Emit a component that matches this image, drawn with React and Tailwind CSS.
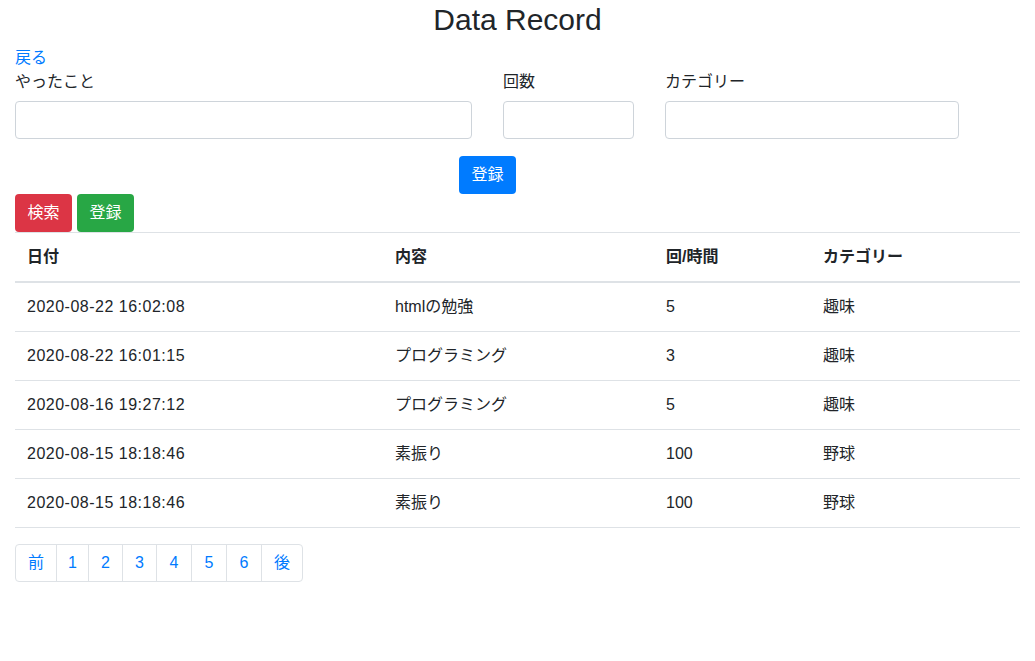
const records = [
  { date: "2020-08-22 16:02:08", content: "htmlの勉強", count: "5", category: "趣味" },
  { date: "2020-08-22 16:01:15", content: "プログラミング", count: "3", category: "趣味" },
  { date: "2020-08-16 19:27:12", content: "プログラミング", count: "5", category: "趣味" },
  { date: "2020-08-15 18:18:46", content: "素振り", count: "100", category: "野球" },
  { date: "2020-08-15 18:18:46", content: "素振り", count: "100", category: "野球" },
];

const pages = [
  { label: "前", w: "w-[42px]" },
  { label: "1", w: "w-[33px]" },
  { label: "2", w: "w-[35px]" },
  { label: "3", w: "w-[35px]" },
  { label: "4", w: "w-[36px]" },
  { label: "5", w: "w-[36px]" },
  { label: "6", w: "w-[36px]" },
  { label: "後", w: "w-[42px]" },
];

export default function App() {
  return (
    <div
      className="min-h-[661px] bg-white px-[15px] text-[16px] leading-6 text-[#212529]"
      style={{ fontFamily: '"Liberation Sans", "Noto Sans CJK JP", sans-serif' }}
    >
      <h2 className="h-[38px] pt-[1px] text-center text-[30px] leading-[38px] mb-[7px]">Data Record</h2>

      <a href="#" className="block pt-px text-[#007bff]">戻る</a>

      {/* form */}
      <div className="w-[945px]">
        <div className="flex">
          <div className="w-[457px]">
            <label className="mb-[7px] block">やったこと</label>
            <input className="h-[38px] w-full rounded border border-[#ced4da]" />
          </div>
          <div className="ml-[31px] w-[131px]">
            <label className="mb-[7px] block">回数</label>
            <input className="h-[38px] w-full rounded border border-[#ced4da]" />
          </div>
          <div className="ml-[31px] w-[294px]">
            <label className="mb-[7px] block">カテゴリー</label>
            <input className="h-[38px] w-full rounded border border-[#ced4da]" />
          </div>
        </div>

        <div className="mt-[17px] flex justify-center">
          <button className="h-[38px] w-[57px] rounded bg-[#007bff] text-white">登録</button>
        </div>
      </div>

      <div className="flex gap-[5px]">
        <button className="h-[38px] w-[57px] rounded bg-[#dc3545] text-white">検索</button>
        <button className="h-[38px] w-[57px] rounded bg-[#28a745] text-white">登録</button>
      </div>

      {/* table */}
      <table className="w-full table-fixed border-collapse">
        <thead>
          <tr className="border-t border-b-2 border-[#dee2e6]">
            <th className="w-[368px] px-3 py-3 text-left font-bold">日付</th>
            <th className="w-[271px] px-3 py-3 text-left font-bold">内容</th>
            <th className="w-[157px] px-3 py-3 text-left font-bold">回/時間</th>
            <th className="px-3 py-3 text-left font-bold">カテゴリー</th>
          </tr>
        </thead>
        <tbody>
          {records.map((r, i) => (
            <tr key={i} className="border-b border-[#dee2e6]">
              <td className="px-3 py-3 tracking-[0.5px]">{r.date}</td>
              <td className="px-3 py-3">{r.content}</td>
              <td className="px-3 py-3">{r.count}</td>
              <td className="px-3 py-3">{r.category}</td>
            </tr>
          ))}
        </tbody>
      </table>

      {/* pagination */}
      <div className="mt-4 flex">
        {pages.map((p, i) => (
          <a
            key={i}
            href="#"
            className={`${p.w} flex h-[38px] items-center justify-center border border-[#dee2e6] text-[#007bff] ${
              i === 0 ? "rounded-l" : "-ml-px"
            } ${i === pages.length - 1 ? "rounded-r" : ""}`}
          >
            {p.label}
          </a>
        ))}
      </div>
    </div>
  );
}
